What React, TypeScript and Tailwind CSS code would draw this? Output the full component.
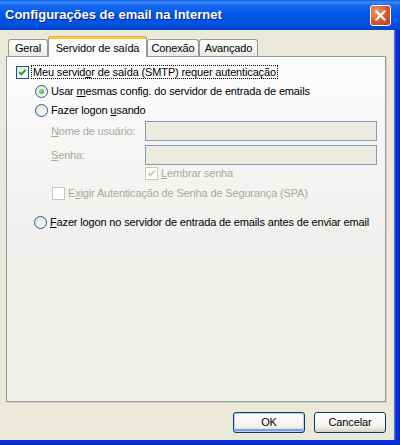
import React from "react";

function Check({ checked, disabled }: { checked?: boolean; disabled?: boolean }) {
  return (
    <span
      className={`flex w-[13px] h-[13px] shrink-0 items-center justify-center border ${
        disabled
          ? "border-[#CAC8BB] bg-white"
          : "border-[#1C5180] bg-[linear-gradient(135deg,#DCDCD7,#FFFFFF_70%)]"
      }`}
    >
      {checked && (
        <svg width="11" height="11" viewBox="0 0 11 11">
          <path
            d="M2.2 5.2 L4.3 7.4 L8.8 2.6"
            fill="none"
            stroke={disabled ? "#CAC8BB" : "#21A121"}
            strokeWidth="2"
          />
        </svg>
      )}
    </span>
  );
}

function Radio({ checked }: { checked?: boolean }) {
  return (
    <span className="flex w-[13px] h-[13px] shrink-0 items-center justify-center rounded-full border border-[#2F5A8C] bg-[radial-gradient(circle_at_65%_65%,#FFFFFF,#D8D8D2)]">
      {checked && (
        <span className="w-[5px] h-[5px] rounded-full bg-[radial-gradient(circle_at_35%_35%,#8CE886,#21A121)]" />
      )}
    </span>
  );
}

function U({ children }: { children: React.ReactNode }) {
  return <span className="underline underline-offset-[1px]">{children}</span>;
}

function Tab({ label, width }: { label: string; width: string }) {
  return (
    <div
      className={`${width} h-[17px] mb-[1px] flex items-center justify-center rounded-t-[3px] border border-b-0 border-[#919B9C] bg-[linear-gradient(to_bottom,#FFFFFF,#F3F3EF_60%,#ECEBE6)]`}
    >
      {label}
    </div>
  );
}

export default function App() {
  return (
    <div className="w-[400px] h-[445px] overflow-hidden flex flex-col font-['Liberation_Sans',Arial,sans-serif] text-[11px] tracking-[-0.15px] text-black">
      {/* title bar */}
      <div className="h-[30px] shrink-0 flex items-center pl-[5px] pr-[9px] bg-[linear-gradient(to_bottom,#0A5EEA_0%,#3C8CF8_7%,#1A6AF2_18%,#0058E6_45%,#0054E2_75%,#0049D4_92%,#0041C4_100%)]">
        <span className="flex-1 text-white font-bold text-[13px] tracking-normal [text-shadow:1px_1px_0_#0A1E8A]">
          Configurações de email na Internet
        </span>
        <span className="flex w-[21px] h-[21px] items-center justify-center rounded-[3px] border border-white bg-[radial-gradient(circle_at_30%_30%,#F09A7C,#D9542E_55%,#C23A18)]">
          <svg width="13" height="13" viewBox="0 0 13 13">
            <path d="M2.5 2.5 L10.5 10.5 M10.5 2.5 L2.5 10.5" stroke="#FFFFFF" strokeWidth="2.2" strokeLinecap="square" />
          </svg>
        </span>
      </div>

      <div className="flex flex-1">
        {/* window body */}
        <div className="w-[394px] h-[410px] bg-[#ECE9D8] flex flex-col pt-[6px] pl-[6px]">
          <div className="relative z-10 h-[21px] -mb-[1px] flex items-end pl-[2px]">
            <Tab label="Geral" width="w-[40px]" />
            <div className="w-[99px] h-[21px] flex items-start justify-center pt-[4px] rounded-t-[3px] border-x border-[#919B9C] bg-[linear-gradient(to_bottom,#E68B2C_0px,#FFC83C_1px,#FFC83C_3px,#FCFCFE_3px)]">
              Servidor de saída
            </div>
            <Tab label="Conexão" width="w-[52px]" />
            <Tab label="Avançado" width="w-[59px]" />
          </div>

          <div className="w-[380px] h-[346px] shrink-0 border border-[#919B9C] shadow-[1px_1px_0_#D0CEBF] bg-[linear-gradient(to_bottom,#FDFDFE,#EFEFED_55%,#F0F0EA)] flex flex-col pl-[9px]">
            <div className="mt-[8px] h-[14px] flex items-center">
              <Check checked />
              <span className="ml-[2px] px-[1px] leading-[12px] border border-dotted border-black">
                Meu servid<U>o</U>r de saída (SMTP) requer autenticação
              </span>
            </div>

            <div className="mt-[5px] h-[14px] flex items-center ml-[19px] gap-[3px]">
              <Radio checked />
              <span>
                Usar <U>m</U>esmas config. do servidor de entrada de emails
              </span>
            </div>

            <div className="mt-[5px] h-[14px] flex items-center ml-[19px] gap-[3px]">
              <Radio />
              <span>
                Fazer logon <U>u</U>sando
              </span>
            </div>

            <div className="mt-[4px] h-[20px] flex items-center ml-[35px]">
              <span className="w-[94px] text-[#ACA899]">
                <U>N</U>ome de usuário:
              </span>
              <div className="w-[232px] h-[20px] border border-[#7F9DB9] bg-[#ECEBE0]" />
            </div>

            <div className="mt-[4px] h-[20px] flex items-center ml-[35px]">
              <span className="w-[94px] text-[#ACA899]">
                <U>S</U>enha:
              </span>
              <div className="w-[232px] h-[20px] border border-[#7F9DB9] bg-[#ECEBE0]" />
            </div>

            <div className="mt-[2px] h-[13px] flex items-center ml-[129px] gap-[3px] text-[#ACA899]">
              <Check checked disabled />
              <span>
                <U>L</U>embrar senha
              </span>
            </div>

            <div className="mt-[7px] h-[13px] flex items-center ml-[36px] gap-[3px] text-[#ACA899]">
              <Check disabled />
              <span>
                E<U>x</U>igir Autenticação de Senha de Segurança (SPA)
              </span>
            </div>

            <div className="mt-[15px] h-[14px] flex items-center ml-[18px] gap-[3px]">
              <Radio />
              <span>
                <U>F</U>azer logon no servidor de entrada de emails antes de enviar email
              </span>
            </div>
          </div>

          <div className="mt-[10px] w-[380px] flex justify-end gap-[9px]">
            <button className="w-[72px] h-[21px] rounded-[3px] border border-[#003C74] bg-[linear-gradient(to_bottom,#FFFFFF,#F3F2EC_70%,#D6D0C5)] shadow-[inset_0_0_0_1px_#B9D1FA,inset_0_-2px_0_1px_#7C9BE8]">
              OK
            </button>
            <button className="w-[72px] h-[21px] rounded-[3px] border border-[#003C74] bg-[linear-gradient(to_bottom,#FFFFFF,#F3F2EC_70%,#D6D0C5)]">
              Cancelar
            </button>
          </div>
        </div>

        {/* right frame */}
        <div className="w-[6px] bg-[linear-gradient(to_right,#5C8DF0,#0831D9_30%,#0831D9_70%,#001EA0)]" />
      </div>

      {/* bottom frame */}
      <div className="h-[5px] shrink-0 bg-[linear-gradient(to_bottom,#0831D9,#0831D9_60%,#001EA0)]" />
    </div>
  );
}
